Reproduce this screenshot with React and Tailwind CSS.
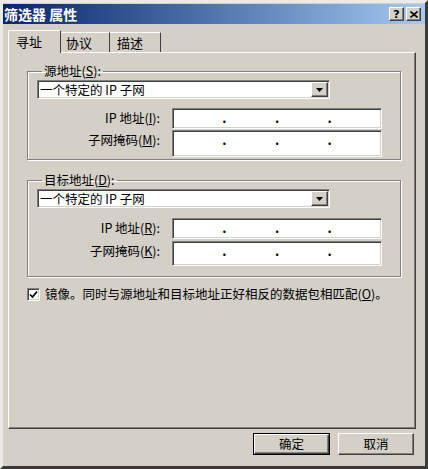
import React from "react";

const sunken =
  "border border-t-[#808080] border-l-[#808080] border-b-white border-r-white shadow-[inset_1px_1px_0_#404040,inset_-1px_-1px_0_#d4d0c8]";
const raised =
  "border border-t-white border-l-white border-b-[#404040] border-r-[#404040] shadow-[inset_-1px_-1px_0_#808080]";

function U({ children }) {
  return <span className="underline underline-offset-[1px]">{children}</span>;
}

function Dropdown() {
  return (
    <div className={`${sunken} bg-white h-[19px] w-[293px] flex items-center`}>
      <div className="flex-1 pl-[2px] pt-[1px] text-[12.5px] leading-[14px] text-black whitespace-nowrap">
        一个特定的 IP 子网
      </div>
      <div className={`${raised} bg-[#d4d0c8] w-[17px] h-[15px] mr-[1px] flex items-center justify-center`}>
        <svg width="7" height="4" viewBox="0 0 7 4">
          <path d="M0 0h7L3.5 4z" fill="#000" />
        </svg>
      </div>
    </div>
  );
}

function IpField({ h }) {
  return (
    <div className={`${sunken} bg-white w-[210px] flex items-start px-[1px] ${h}`}>
      <div className="flex-1" />
      <span className="pt-[1px] text-[13px] leading-[16px] font-bold">.</span>
      <div className="flex-1" />
      <span className="pt-[1px] text-[13px] leading-[16px] font-bold">.</span>
      <div className="flex-1" />
      <span className="pt-[1px] text-[13px] leading-[16px] font-bold">.</span>
      <div className="flex-1" />
    </div>
  );
}

function Row({ label, h, labelPt }) {
  return (
    <div className="flex items-start">
      <div className={`w-[123px] text-right text-[12.5px] leading-[14px] whitespace-nowrap ${labelPt}`}>{label}</div>
      <div className="ml-[12px]">
        <IpField h={h} />
      </div>
    </div>
  );
}

function Group({ legend, className, children }) {
  return (
    <fieldset
      className={`border border-[#808080] shadow-[1px_1px_0_#fff,inset_1px_1px_0_#fff] pl-[9px] ${className}`}
    >
      <legend className="ml-[5px] px-[2px] text-[12.5px] leading-[14px] whitespace-nowrap">{legend}</legend>
      {children}
    </fieldset>
  );
}

export default function App() {
  return (
    <div className="w-[428px] h-[469px] bg-[#d4d0c8] border-t-[3px] border-l-[3px] border-r-[3px] border-b-[3px] border-t-[#eceae6] border-l-[#eceae6] border-r-[#3a3a3a] border-b-[#3a3a3a] text-black [font-family:'Noto_Sans_CJK_SC',sans-serif] flex flex-col">
      {/* title bar */}
      <div className="mt-[1px] h-[20px] bg-gradient-to-r from-[#0a246a] to-[#a6caf0] flex items-center pl-[1px] pr-[4px]">
        <div className="text-white font-bold text-[14px] leading-[16px] whitespace-nowrap">筛选器 属性</div>
        <div className="flex-1" />
        <div className="flex gap-[2px]">
          <div className={`${raised} bg-[#d4d0c8] w-[15px] h-[14px] flex items-center justify-center`}>
            <span className="text-[11px] leading-[11px] font-bold [font-family:'DejaVu_Sans',sans-serif]">?</span>
          </div>
          <div className={`${raised} bg-[#d4d0c8] w-[15px] h-[14px] flex items-center justify-center`}>
            <svg width="8" height="7" viewBox="0 0 8 7">
              <path d="M0.5 0.5L7.5 6.5M7.5 0.5L0.5 6.5" stroke="#000" strokeWidth="1.6" />
            </svg>
          </div>
        </div>
      </div>

      {/* tabs */}
      <div className="mt-[6px] ml-[5px] h-[22px] flex items-end relative z-10">
        <div className="h-[23px] w-[53px] mb-[-1px] bg-[#d4d0c8] border-t border-l border-r border-t-white border-l-white border-r-[#404040] pl-[7px] pt-[3px] text-[13px] leading-[16px]">
          寻址
        </div>
        <div className="h-[20px] w-[49px] border-t border-r border-t-white border-r-[#404040] pl-[5px] pt-[2px] text-[13px] leading-[16px]">
          协议
        </div>
        <div className="h-[20px] w-[51px] border-t border-r border-t-white border-r-[#404040] pl-[7px] pt-[2px] text-[13px] leading-[16px]">
          描述
        </div>
      </div>

      {/* panel */}
      <div className="ml-[5px] w-[408px] h-[377px] border border-t-white border-l-white border-b-[#404040] border-r-[#404040] shadow-[inset_-1px_-1px_0_#808080] pl-[18px] pr-[14px] flex flex-col">
        <Group legend={<>源地址(<U>S</U>):</>} className="mt-[11px] pb-[2px]">
          <div className="mt-[2px]">
            <Dropdown />
          </div>
          <div className="mt-[9px] flex flex-col gap-[1px]">
            <Row label={<>IP 地址(<U>I</U>):</>} h="h-[21px]" labelPt="pt-[3px]" />
            <Row label={<>子网掩码(<U>M</U>):</>} h="h-[27px]" labelPt="pt-[3px]" />
          </div>
        </Group>

        <Group legend={<>目标地址(<U>D</U>):</>} className="mt-[13px] pb-[10px]">
          <div className="mt-[2px]">
            <Dropdown />
          </div>
          <div className="mt-[10px] flex flex-col gap-[2px]">
            <Row label={<>IP 地址(<U>R</U>):</>} h="h-[21px]" labelPt="pt-[3px]" />
            <Row label={<>子网掩码(<U>K</U>):</>} h="h-[25px]" labelPt="pt-[3px]" />
          </div>
        </Group>

        <div className="mt-[10px] flex items-center">
          <div className={`${sunken} bg-white w-[13px] h-[13px] flex items-center justify-center`}>
            <svg width="9" height="9" viewBox="0 0 9 9">
              <path d="M1 4.5L3.5 7L8 1.5" stroke="#000" strokeWidth="1.7" fill="none" />
            </svg>
          </div>
          <div className="ml-[5px] text-[12.5px] leading-[14px] whitespace-nowrap">
            镜像。同时与源地址和目标地址正好相反的数据包相匹配(<U>O</U>)。
          </div>
        </div>
      </div>

      {/* buttons */}
      <div className="mt-[4px] ml-[250px] flex gap-[8px]">
        <div className="w-[77px] h-[22px] border border-black">
          <div className={`${raised} w-full h-full flex items-center justify-center text-[12.5px] leading-[14px]`}>确定</div>
        </div>
        <div className={`${raised} w-[76px] h-[22px] flex items-center justify-center text-[12.5px] leading-[14px]`}>取消</div>
      </div>
    </div>
  );
}
